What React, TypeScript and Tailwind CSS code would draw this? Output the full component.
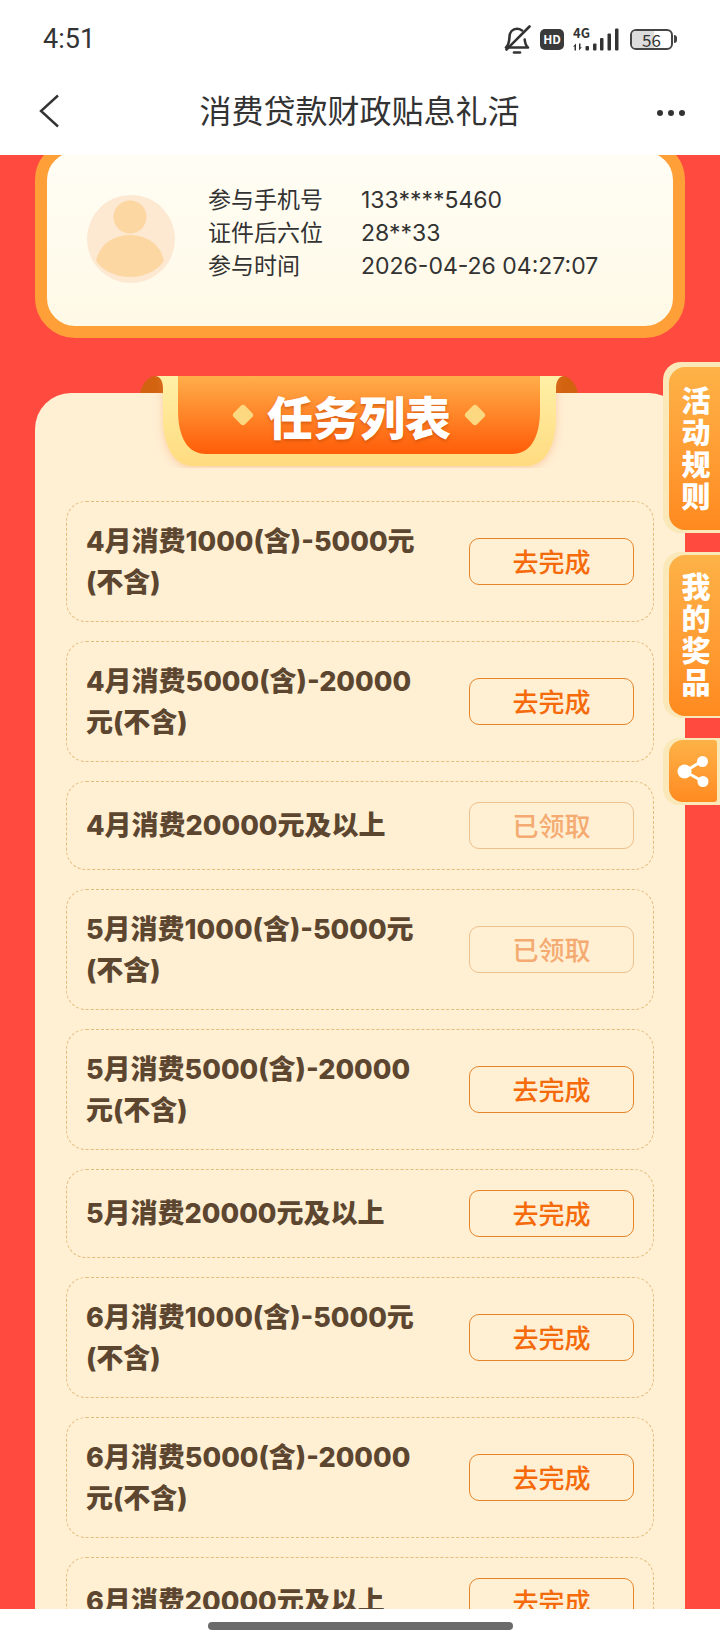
const tasks = [
  { title: "4月消费1000(含)-5000元(不含)", done: false },
  { title: "4月消费5000(含)-20000元(不含)", done: false },
  { title: "4月消费20000元及以上", done: true },
  { title: "5月消费1000(含)-5000元(不含)", done: true },
  { title: "5月消费5000(含)-20000元(不含)", done: false },
  { title: "5月消费20000元及以上", done: false },
  { title: "6月消费1000(含)-5000元(不含)", done: false },
  { title: "6月消费5000(含)-20000元(不含)", done: false },
  { title: "6月消费20000元及以上", done: false },
];

const StatusIcons = () => (
  <div className="flex items-center">
    <svg width="27" height="29" viewBox="0 0 27 29" fill="none" stroke="#333" strokeWidth="2.6" strokeLinecap="round" strokeLinejoin="round">
      <path d="M2 22.5h22c-2.5-2-3-4.5-3.300-8M18 5.500c-1.400-1-3-1.700-5-1.700-4.500 0-7.300 3.300-7.500 8-.2 4.500-.5 8-3.500 10.700" />
      <path d="M2.500 24.500 25.500 1.500" />
      <path d="M10 27.500h6" />
    </svg>
    <div className="ml-[9px] flex h-[21px] w-[24px] items-center justify-center rounded-[5px] bg-[#3a3a3a] text-[12px] leading-none font-bold text-white">
      HD
    </div>
    <div className="relative ml-[9px] h-[23px] w-[47px]">
      <span className="absolute top-[-3px] left-0 text-[13px] leading-[16px] font-bold text-[#333]">4G</span>
      <svg className="absolute top-0 left-0" width="47" height="23" viewBox="0 0 47 23" fill="#333">
        <path d="M3 15.500v7H1.500v-4L0 18.500zM6 22.500v-7h1.500v4l1.500-.5z" />
        <rect x="12.500" y="18" width="3.500" height="4.500" rx="1" />
        <rect x="20" y="15.500" width="3.500" height="7" rx="1" />
        <rect x="27" y="10" width="3.500" height="12.500" rx="1" />
        <rect x="34.500" y="5.500" width="3.500" height="17" rx="1" />
        <rect x="42" y="0.500" width="3.500" height="22" rx="1" />
      </svg>
    </div>
    <div className="ml-[10px] flex items-center">
      <div className="relative flex h-[21px] w-[43px] items-center justify-center rounded-[6px] border-2 border-[#444] bg-white">
        <div className="absolute inset-y-0 left-0 w-[56%] rounded-l-[4px] bg-[#dcdcdc]" />
        <span className="relative text-[17px] leading-[17px] text-[#333]">56</span>
      </div>
      <div className="ml-px h-[8px] w-[3px] rounded-r-sm bg-[#444]" />
    </div>
  </div>
);

const Ribbon = () => (
  <div className="absolute top-[-17px] left-[105px] h-[92px] w-[438px]">
    <svg className="absolute inset-0" width="438" height="92" viewBox="0 0 438 92">
      <defs>
        <linearGradient id="ribbonOrange" x1="0" y1="0" x2="0" y2="1">
          <stop offset="0" stopColor="#ffae4a" />
          <stop offset="1" stopColor="#ff5c08" />
        </linearGradient>
        <linearGradient id="ribbonCream" x1="0" y1="0" x2="0" y2="1">
          <stop offset="0" stopColor="#fff0a6" />
          <stop offset="1" stopColor="#ffdb80" />
        </linearGradient>
        <filter id="ribbonShadow" x="-5%" y="-5%" width="110%" height="125%">
          <feDropShadow dx="0" dy="2" stdDeviation="4" floodColor="#f08a50" floodOpacity="0.35" />
        </filter>
      </defs>
      <path d="M0 17C2 7 9 0 16 0H30V17Z" fill="#d2620f" />
      <path d="M438 17C436 7 429 0 422 0H408V17Z" fill="#d2620f" />
      <path
        d="M15 0H424C419 0 416 5 416 12V41C416 72 404 90 386 90H53C35 90 23 72 23 41V12C23 5 20 0 15 0Z"
        fill="url(#ribbonCream)"
        filter="url(#ribbonShadow)"
      />
      <path d="M38 0H400V34C400 62 390 78 372 78H66C48 78 38 62 38 34Z" fill="url(#ribbonOrange)" />
    </svg>
    <div className="relative flex h-[78px] items-center justify-center gap-[16px]">
      <div className="h-[16px] w-[16px] rotate-45 rounded-[3px] bg-[#fcd881]" />
      <span className="text-[46px] leading-none font-black text-white [text-shadow:0_2px_3px_rgba(190,70,0,0.55)]">
        任务列表
      </span>
      <div className="h-[16px] w-[16px] rotate-45 rounded-[3px] bg-[#fcd881]" />
    </div>
  </div>
);

const SideTab = ({ label, first }: { label: string; first?: boolean }) => (
  <div className={first ? "rounded-l-[18px] bg-[#fbe8b8] pt-[5px] pb-[3px] pl-[6px]" : "rounded-l-[18px] bg-[#fbe8b8] pt-[3px] pb-[2px] pl-[6px]"}>
    <div
      className={
        first
          ? "flex h-[163px] w-[51px] flex-col items-center justify-center rounded-l-[16px] bg-gradient-to-b from-[#fdb247] to-[#ff8a1f] pb-[4px] pl-[3px] text-[29px] leading-[32px] font-black text-white"
          : "flex h-[161px] w-[51px] flex-col items-center justify-center rounded-l-[16px] bg-gradient-to-b from-[#fdb247] to-[#ff8a1f] pb-[6px] pl-[3px] text-[29px] leading-[32px] font-black text-white"
      }
    >
      {label.split("").map((c) => (
        <div key={c} className="h-[32px]">
          {c}
        </div>
      ))}
    </div>
  </div>
);

const TaskRow = ({ title, done }: { title: string; done: boolean }) => (
  <div className="flex min-h-[89px] items-center justify-between rounded-[20px] border border-dashed border-[#e3bd7c] py-[18.500px] pr-[19px] pl-[19px]">
    <p className="w-[340px] font-['Inter','Noto_Sans_CJK_SC',sans-serif] text-[27px] leading-[41px] font-extrabold text-[#5c4630]">
      {title}
    </p>
    <button
      className={
        done
          ? "h-[47px] w-[165px] rounded-[10px] border border-[#eec08c] pb-[3px] text-[26px] font-medium text-[#f4aa70]"
          : "h-[47px] w-[165px] rounded-[10px] border border-[#e5852a] pb-[3px] text-[26px] font-medium text-[#f56a0a]"
      }
    >
      {done ? "已领取" : "去完成"}
    </button>
  </div>
);

export default function App() {
  return (
    <div className="relative flex h-[1640px] w-[720px] flex-col overflow-hidden bg-white font-['Noto_Sans_CJK_SC',sans-serif]">
      <div className="flex h-[76px] items-center justify-between pt-[2px] pr-[43px] pl-[43px]">
        <span className="font-['Roboto',sans-serif] text-[27px] text-[#333]">4:51</span>
        <StatusIcons />
      </div>

      <div className="flex h-[79px] items-center justify-between pr-[35px] pb-[10px] pl-[38px]">
        <svg width="22" height="34" viewBox="0 0 22 34" fill="none" stroke="#333" strokeWidth="2.400">
          <path d="M20 1.500 3 17l17 15.500" />
        </svg>
        <h1 className="mb-[4px] ml-[2px] text-[32px] font-normal text-[#333]">消费贷款财政贴息礼活</h1>
        <div className="mt-[4px] flex gap-[5px]">
          <div className="h-[6px] w-[6px] rounded-full bg-[#333]" />
          <div className="h-[6px] w-[6px] rounded-full bg-[#333]" />
          <div className="h-[6px] w-[6px] rounded-full bg-[#333]" />
        </div>
      </div>

      <main className="min-h-0 flex-1 overflow-hidden bg-[#ff4a40] px-[35px]">
        <div className="mt-[-15px] h-[198px] rounded-[40px] border-[12px] border-[#ff9f38] bg-gradient-to-b from-[#fffdf5] to-[#fff9e6]">
          <div className="flex h-full items-center pl-[40px]">
            <svg width="88" height="88" viewBox="0 0 88 88">
              <circle cx="44" cy="44" r="44" fill="#fde8d2" />
              <circle cx="43" cy="22" r="16.500" fill="#fdd7a2" />
              <path d="M9 66C12 50 26 40 43 40S74 50 77 66C70 76 57 82 43 82S16 76 9 66Z" fill="#fdd7a2" />
            </svg>
            <div className="mb-[16px] ml-[33px] flex flex-col text-[23px] leading-[33px] text-[#333]">
              <div className="flex">
                <span className="w-[153px]">参与手机号</span>
                <span className="translate-y-[2px] font-['Inter','Noto_Sans_CJK_SC',sans-serif]">133****5460</span>
              </div>
              <div className="flex">
                <span className="w-[153px]">证件后六位</span>
                <span className="translate-y-[2px] font-['Inter','Noto_Sans_CJK_SC',sans-serif]">28**33</span>
              </div>
              <div className="flex">
                <span className="w-[153px]">参与时间</span>
                <span className="translate-y-[2px] font-['Inter','Noto_Sans_CJK_SC',sans-serif]">2026-04-26 04:27:07</span>
              </div>
            </div>
          </div>
        </div>

        <section className="relative mt-[55px] rounded-t-[36px] bg-[#ffefd3] pt-[108px] pr-[31px] pl-[31px]">
          <Ribbon />
          <div className="flex flex-col gap-[19px]">
            {tasks.map((t) => (
              <TaskRow key={t.title} title={t.title} done={t.done} />
            ))}
          </div>
        </section>
      </main>

      <div className="flex h-[31px] items-start justify-center bg-white pt-[13px]">
        <div className="h-[8px] w-[305px] rounded-full bg-[#6b6b6b]" />
      </div>

      <div className="absolute top-[362px] right-0 flex w-[57px] flex-col">
        <SideTab label="活动规则" first />
        <div className="h-[19px]" />
        <SideTab label="我的奖品" />
        <div className="h-[20px]" />
        <div className="rounded-l-[16px] bg-[#fbe8b8] pt-[2px] pr-[3px] pb-[3px] pl-[6px]">
          <div className="flex h-[62px] items-center justify-center rounded-l-[14px] rounded-r-[3px] bg-gradient-to-b from-[#fdb247] to-[#ff8a1f]">
            <svg width="32" height="31" viewBox="0 0 32 31" fill="white" stroke="white">
              <path d="M8 15.500 25 5M8 15.500 26 25.500" strokeWidth="3" fill="none" />
              <circle cx="7.500" cy="15.500" r="7" stroke="none" />
              <circle cx="25.500" cy="5.500" r="5.500" stroke="none" />
              <circle cx="26" cy="25.500" r="5.500" stroke="none" />
            </svg>
          </div>
        </div>
      </div>
    </div>
  );
}
